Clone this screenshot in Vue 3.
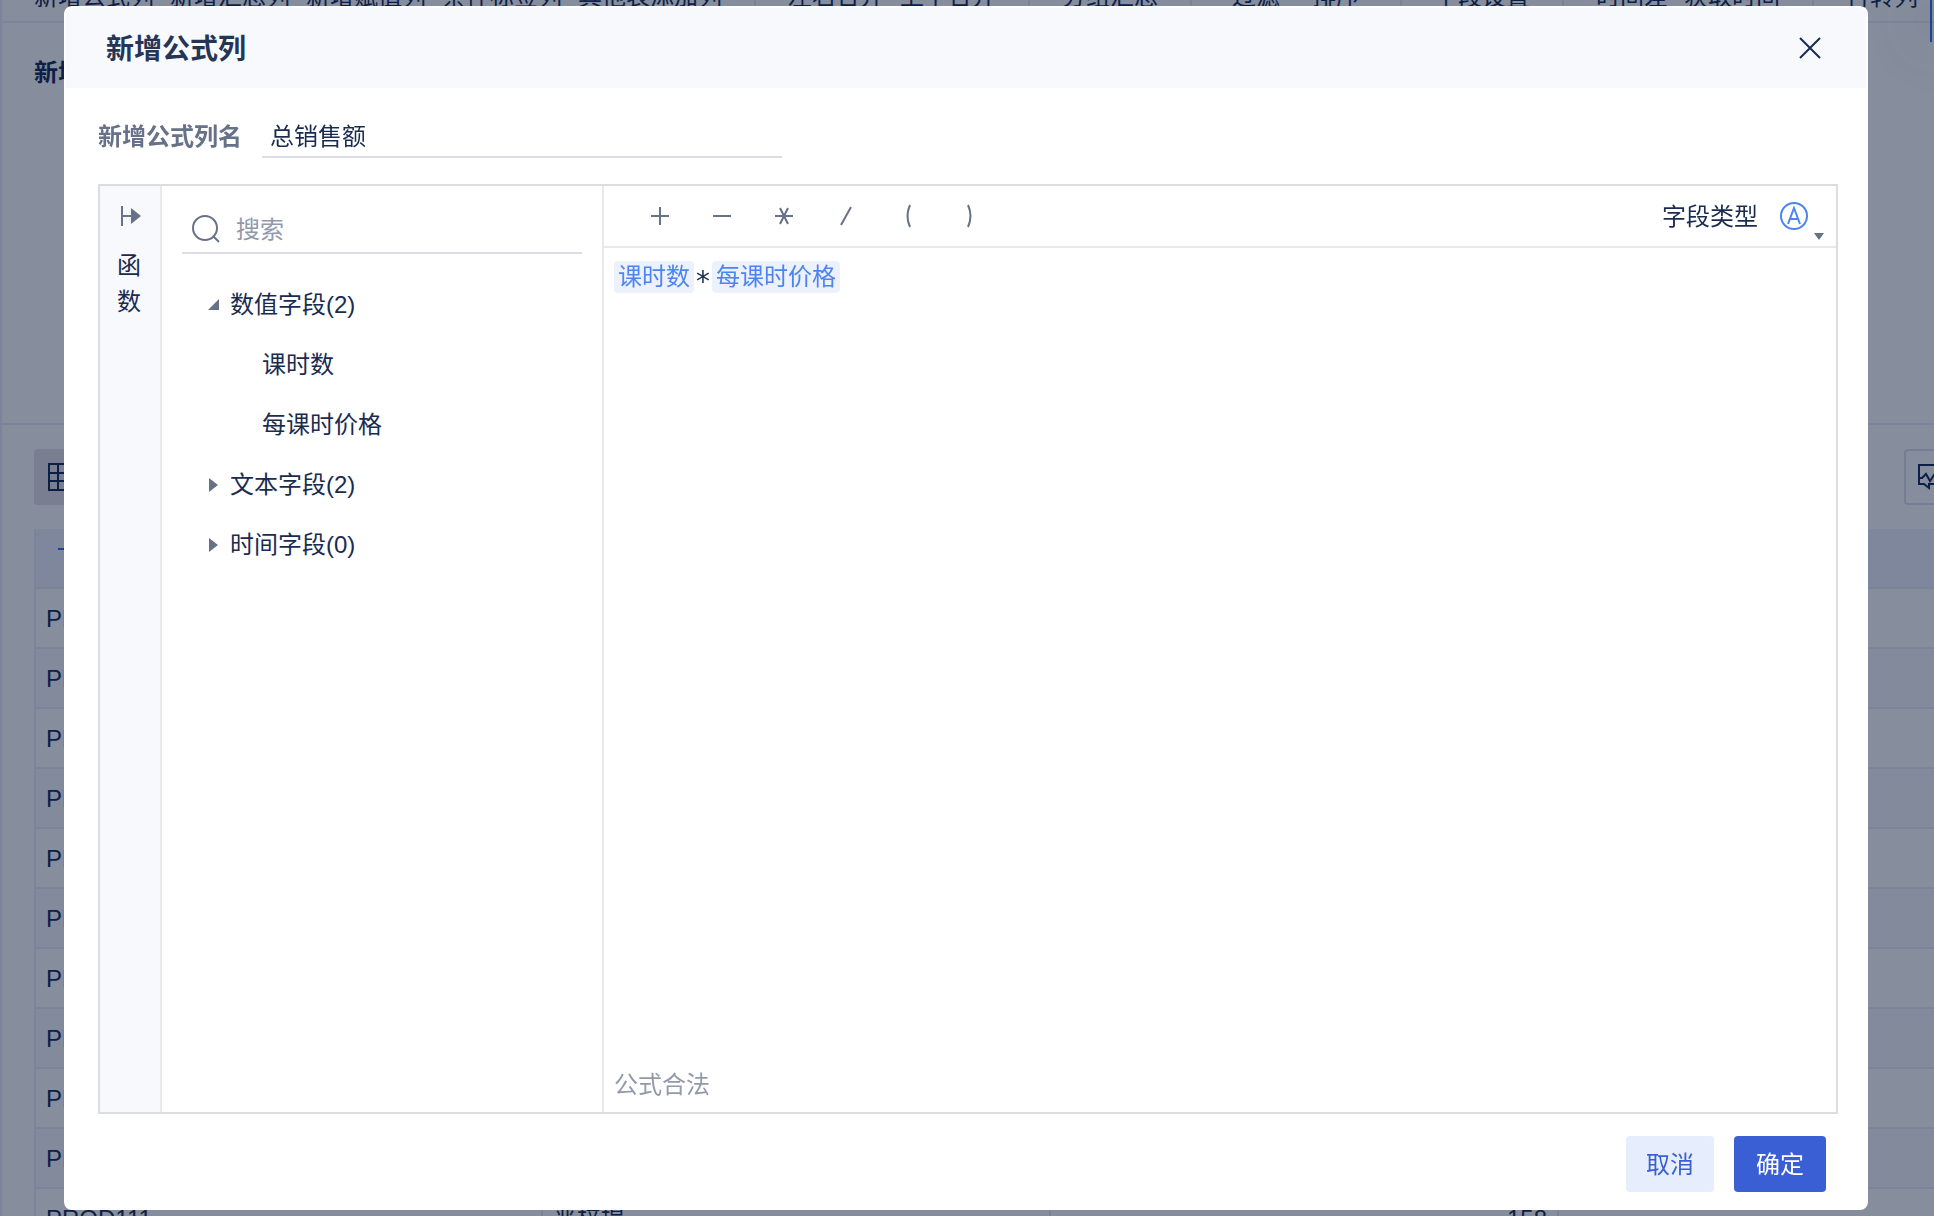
<script setup>
import { ref } from 'vue'

const columnName = ref('总销售额')
const keyword = ref('')

const toolGroups = [
  ['新增公式列', '新增汇总列', '新增赋值列', '条件标签列', '其他表添加列'],
  ['左右合并', '上下合并'],
  ['分组汇总'],
  ['过滤', '排序'],
  ['字段设置'],
  ['时间差', '获取时间'],
  ['行转列'],
]

const rows = [
  ...Array.from({ length: 10 }, (_, i) => ({ id: 'PROD' + (101 + i), name: '', count: '' })),
  { id: 'PROD111', name: '严梓提', count: '158' },
]

const operators = [
  { name: '加', path: 'M1 10H19M10 1V19' },
  { name: '减', path: 'M1 10H19' },
  { name: '乘', path: 'M1 10H19M6 2L14 18M14 2L6 18' },
  { name: '除', path: 'M15 1L5 19' },
  { name: '左括号', path: 'M12 -1Q7 10 12 21' },
  { name: '右括号', path: 'M8 -1Q13 10 8 21' },
]

const groups = ref([
  { label: '数值字段', count: 2, open: true, fields: ['课时数', '每课时价格'] },
  { label: '文本字段', count: 2, open: false, fields: [] },
  { label: '时间字段', count: 0, open: false, fields: [] },
])
</script>

<template>
  <div class="page">
    <nav class="tools">
      <div v-for="(group, i) in toolGroups" :key="i" class="tool-group">
        <button v-for="tool in group" :key="tool" type="button">{{ tool }}</button>
      </div>
    </nav>
    <div class="corner"></div>
    <section class="step">
      <h1>新增公式列</h1>
    </section>
    <section class="preview">
      <div class="preview-bar">
        <button type="button" class="view-toggle" aria-label="表格">
          <svg width="28" height="28" viewBox="0 0 28 28"><path d="M1 1H27V27H1ZM1 10H27M1 18H27M10 1V27M18 1V27" /></svg>
        </button>
        <button type="button" class="chart-toggle" aria-label="图表">
          <svg width="30" height="28" viewBox="0 0 30 28"><path d="M1 2H29V21H11V25L6 21H1ZM1 15H4L8 11L12 18L20 6" /></svg>
        </button>
      </div>
      <table>
        <thead>
          <tr>
            <th><svg width="24" height="24" viewBox="0 0 24 24"><path d="M2 3H22M12 3V22" /></svg></th>
            <th></th>
            <th></th>
            <th></th>
          </tr>
        </thead>
        <tbody>
          <tr v-for="row in rows" :key="row.id">
            <td>{{ row.id }}</td>
            <td>{{ row.name }}</td>
            <td class="num">{{ row.count }}</td>
            <td></td>
          </tr>
        </tbody>
      </table>
    </section>
  </div>

  <div class="dialog" role="dialog" aria-labelledby="dialog-title">
    <header class="dialog-head">
      <h2 id="dialog-title">新增公式列</h2>
      <button type="button" class="close" aria-label="关闭">
        <svg width="24" height="24" viewBox="0 0 24 24"><path d="M2 2L22 22M22 2L2 22" /></svg>
      </button>
    </header>

    <div class="name-row">
      <label for="column-name">新增公式列名</label>
      <input id="column-name" v-model="columnName" type="text">
    </div>

    <div class="editor">
      <aside class="rail">
        <button type="button" aria-label="展开函数">
          <svg width="20" height="20" viewBox="0 0 20 20"><path class="line" d="M2 0V20M2 10H12" /><path class="solid" d="M11 2L21 10L11 18Z" /></svg>
        </button>
        <span>函数</span>
      </aside>

      <div class="fields">
        <label class="search">
          <svg width="28" height="28" viewBox="0 0 28 28"><circle cx="13" cy="13" r="12" /><path d="M21 21L27 27" /></svg>
          <input v-model="keyword" type="text" placeholder="搜索" aria-label="搜索">
        </label>
        <ul class="tree">
          <li v-for="group in groups" :key="group.label">
            <button type="button" class="node" :aria-expanded="group.open" @click="group.open = !group.open">
              <svg width="12" height="14" viewBox="0 0 12 14">
                <path v-if="group.open" d="M11 1V12H0Z" />
                <path v-else d="M1 0L10 7L1 14Z" />
              </svg>
              {{ group.label }}({{ group.count }})
            </button>
            <ul v-if="group.open">
              <li v-for="field in group.fields" :key="field" class="leaf">{{ field }}</li>
            </ul>
          </li>
        </ul>
      </div>

      <div class="formula">
        <div class="operators">
          <button v-for="op in operators" :key="op.name" type="button" :aria-label="op.name">
            <svg width="20" height="20" viewBox="0 0 20 20"><path :d="op.path" /></svg>
          </button>
          <div class="type">
            <span>字段类型</span>
            <button type="button" class="type-pick" aria-label="文本">
              <svg width="28" height="28" viewBox="0 0 28 28"><circle cx="14" cy="14" r="13" /><path d="M8 22L14 6L20 22M10 17H18" /></svg>
              <svg class="caret" width="10" height="7" viewBox="0 0 10 7"><path d="M0 0H10L5 7Z" /></svg>
            </button>
          </div>
        </div>
        <div class="expression">
          <span class="tag">课时数</span><span class="times">*</span><span class="tag">每课时价格</span>
        </div>
        <p class="status">公式合法</p>
      </div>
    </div>

    <footer class="actions">
      <button type="button" class="cancel">取消</button>
      <button type="button" class="confirm">确定</button>
    </footer>
  </div>
</template>

<style>
body {
  margin: 0;
  overflow: hidden;
  background: #868d9c;
}
</style>

<style scoped>
* {
  box-sizing: border-box;
}

button,
input {
  margin: 0;
  padding: 0;
  border: 0;
  background: none;
  color: inherit;
  font: inherit;
}

button {
  cursor: pointer;
}

input {
  outline: 0;
}

h1,
h2,
p,
ul {
  margin: 0;
  padding: 0;
  list-style: none;
}

svg {
  display: block;
  flex: none;
  overflow: visible;
  fill: none;
  stroke: currentColor;
  stroke-width: 2;
}

.page,
.dialog {
  font: 24px/36px "Liberation Sans", "Noto Sans CJK SC", sans-serif;
}

.page {
  display: flex;
  flex-direction: column;
  height: 100vh;
  overflow: hidden;
  border-left: 2px solid #7b849a;
  background: #868d9c;
  color: #0c2047;
}

/* The toolbar is scrolled partly out of view. */
.tools {
  display: flex;
  flex: none;
  margin-top: -21px;
  border-bottom: 2px solid #7b849a;
  white-space: nowrap;
}

.tool-group {
  display: flex;
  gap: 16px;
  padding: 0 32px 6px;
}

.tool-group + .tool-group {
  border-left: 2px solid #7a8496;
}

.tool-group button {
  min-width: 64px;
}

.corner {
  position: absolute;
  top: 0;
  right: 2px;
  width: 2px;
  height: 42px;
  background: #20419a;
  box-shadow: 0 0 56px 8px rgba(80, 90, 112, 0.2);
}

.step {
  flex: none;
  height: 402px;
  padding: 32px;
  border-bottom: 2px solid #7b849a;
}

.step h1 {
  font-size: 24px;
  line-height: 36px;
}

.preview {
  flex: none;
  padding: 24px 0 0 32px;
}

.preview-bar {
  display: flex;
  justify-content: space-between;
  margin: 0 -28px 24px 0;
}

.view-toggle,
.chart-toggle {
  width: 58px;
  height: 56px;
  padding: 0 14px;
  border-radius: 4px;
}

.view-toggle {
  background: #797e91;
}

.chart-toggle {
  padding: 0 12px;
  border: 2px solid #747e92;
}

table {
  width: calc(100% + 131px);
  border-collapse: separate;
  border-spacing: 0;
  border-left: 2px solid #7b849a;
  table-layout: fixed;
}

th,
td {
  height: 60px;
  padding: 2px 10px 0;
  border-bottom: 2px solid #7b8496;
  text-align: left;
}

th {
  padding: 0 20px;
  background: #7e879b;
  color: #1f428f;
}

th:first-child {
  width: 505px;
}

td + td {
  border-left: 2px solid #7b8496;
}

tbody tr:nth-child(even) {
  background: #838a9b;
}

td.num {
  text-align: right;
}

.dialog {
  position: fixed;
  inset: 6px 66px 6px 64px;
  display: flex;
  flex-direction: column;
  border: 2px solid #fff;
  border-radius: 8px;
  background: #fff;
  color: #1a2b50;
}

.dialog-head {
  display: flex;
  flex: none;
  align-items: center;
  justify-content: space-between;
  height: 80px;
  padding: 0 44px 0 40px;
  border-radius: 6px 6px 0 0;
  background: #f7f9fd;
}

.dialog-head h2 {
  padding-top: 4px;
  font-size: 28px;
  font-weight: bold;
  line-height: 40px;
  color: #263554;
}

.name-row {
  display: flex;
  align-items: center;
  gap: 20px;
  padding: 24px 32px 26px;
}

.name-row label {
  padding-top: 4px;
  color: #677289;
  font-weight: bold;
}

.name-row input {
  width: 520px;
  height: 46px;
  padding: 0 8px;
  border-bottom: 2px solid #dcdde5;
}

.editor {
  display: flex;
  flex: 1;
  min-height: 0;
  margin: 0 28px 0 32px;
  border: 2px solid #dcdde3;
}

.rail {
  display: flex;
  flex: none;
  flex-direction: column;
  align-items: center;
  gap: 22px;
  width: 62px;
  padding-top: 20px;
  border-right: 2px solid #e8e9ef;
  background: #f7f9fd;
}

.rail button {
  height: 20px;
  color: #677289;
}

.rail span {
  width: 26px;
}

.solid {
  fill: currentColor;
  stroke: none;
}

.fields {
  flex: none;
  width: 442px;
  padding: 20px 20px 0;
  border-right: 2px solid #e8e9ef;
}

.search {
  display: flex;
  align-items: center;
  gap: 16px;
  height: 48px;
  padding-left: 10px;
  border-bottom: 2px solid #dcdde5;
  color: #677289;
}

.search input {
  flex: 1;
  min-width: 0;
  padding-top: 2px;
}

.search input::placeholder {
  color: #9299aa;
  opacity: 1;
}

.tree {
  padding-top: 21px;
}

.node {
  display: flex;
  align-items: center;
  gap: 10px;
  width: 100%;
  height: 60px;
  padding-left: 26px;
}

.node svg {
  fill: #677289;
  stroke: none;
}

.leaf {
  height: 60px;
  padding-left: 80px;
  line-height: 60px;
}

.formula {
  display: flex;
  flex: 1;
  flex-direction: column;
  min-width: 0;
}

.operators {
  display: flex;
  flex: none;
  align-items: center;
  height: 62px;
  padding: 0 10px 0 25px;
  border-bottom: 2px solid #e8e9ef;
}

.operators > button {
  display: flex;
  justify-content: center;
  width: 62px;
  color: #677289;
}

.type {
  display: flex;
  align-items: center;
  gap: 22px;
  margin-left: auto;
}

.type span {
  padding-top: 2px;
}

.type-pick {
  position: relative;
  width: 46px;
  color: #4c84f0;
}

.caret {
  position: absolute;
  right: 2px;
  bottom: -10px;
  fill: #677289;
  stroke: none;
}

.expression {
  display: flex;
  flex: 1;
  align-items: flex-start;
  padding: 13px 10px;
}

.tag {
  padding: 0 4px;
  border-radius: 4px;
  background: #ecf1fc;
  color: #4c84f0;
  line-height: 32px;
}

.times {
  width: 18px;
  font-family: "DejaVu Sans Mono", monospace;
  font-size: 28px;
  line-height: 42px;
  text-align: center;
}

.status {
  padding: 0 10px 9px;
  color: #9299aa;
}

.actions {
  display: flex;
  flex: none;
  justify-content: flex-end;
  gap: 20px;
  padding: 22px 40px 16px;
}

.actions button {
  width: 92px;
  height: 56px;
  padding-top: 2px;
  border-radius: 4px;
}

.actions .cancel {
  width: 88px;
  background: #e6eefe;
  color: #3a5fd5;
}

.actions .confirm {
  background: #3a5fd5;
  color: #fff;
}
</style>
